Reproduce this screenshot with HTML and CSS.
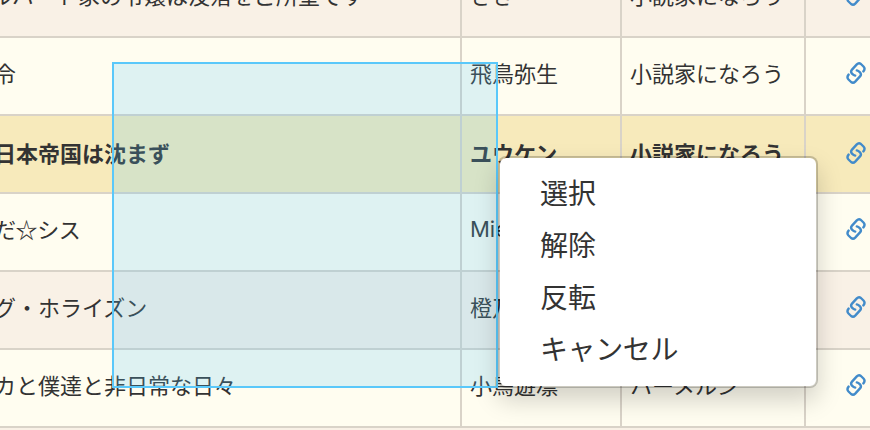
FILE: index.html
```html
<!DOCTYPE html>
<html lang="ja">
<head>
<meta charset="utf-8">
<title>小説一覧</title>
<link rel="stylesheet" href="styles.css">
</head>
<body>
<svg class="defs" aria-hidden="true">
  <symbol id="link" viewBox="0 0 20 22">
    <g fill="none" stroke="currentColor" stroke-width="2.4" stroke-linecap="round" stroke-linejoin="round">
      <path d="M9.2 13.6 Q7.7 13.3 6 11.6 Q4.2 9.6 6 7.6 L10.8 2.4 Q12.8 .4 14.9 2 L17.5 4.5 Q19.6 6.8 17.4 9.4"/>
      <path d="M10.8 8.4 Q12.3 8.7 14 10.4 Q15.8 12.4 14 14.4 L9.2 19.6 Q7.2 21.6 5.1 20 L2.5 17.5 Q.4 15.2 2.6 12.6"/>
    </g>
  </symbol>
</svg>
<div class="table">
  <div class="row odd first"><div>ルバート家の令嬢は没落をご所望です</div><div>さき</div><div>小説家になろう</div><div><svg class="icon"><use href="#link"/></svg></div></div>
  <div class="row"><div>令</div><div>飛鳥弥生</div><div>小説家になろう</div><div><svg class="icon"><use href="#link"/></svg></div></div>
  <div class="row marked"><div>日本帝国は沈まず</div><div>ユウケン</div><div>小説家になろう</div><div><svg class="icon"><use href="#link"/></svg></div></div>
  <div class="row"><div class="tight">だ☆シス</div><div class="latin">Mie</div><div></div><div><svg class="icon"><use href="#link"/></svg></div></div>
  <div class="row odd"><div>グ・ホライズン</div><div>橙乃</div><div></div><div><svg class="icon"><use href="#link"/></svg></div></div>
  <div class="row"><div>カと僕達と非日常な日々</div><div>小鳥遊凛</div><div>ハーメルン</div><div><svg class="icon"><use href="#link"/></svg></div></div>
  <div class="row odd last"></div>
</div>
<div class="selection"></div>
<ul class="menu">
  <li>選択</li>
  <li>解除</li>
  <li>反転</li>
  <li class="tight">キャンセル</li>
</ul>
</body>
</html>
```
FILE: styles.css
```css
body {
  margin: 0;
  height: 430px;
  overflow: hidden;
  background: #fffdf0;
  color: #333;
  font-family: "Noto Sans CJK JP", sans-serif;
  font-size: 22px;
  line-height: 32px;
}
.defs { display: none; }
.table { margin-top: -40px; }
.row {
  display: grid;
  grid-template-columns: 462px 160px 184px 64px;
  height: 78px;
  background: #fffdf0;
}
.row.odd { background: #f9f1e6; }
.row.marked { background: #f7eabb; font-weight: 700; }
.row.last { height: 2px; }
.row > div {
  box-sizing: border-box;
  display: flex;
  align-items: center;
  border-right: 2px solid #d9d3c8;
  border-bottom: 2px solid #d9d3c8;
  padding: 0 0 8px 8px;
  white-space: nowrap;
}
.row > div:first-child { padding-left: 0; text-indent: -6px; }
.row.first > div:first-child { text-indent: -10px; }
.row > .latin { font-family: Inter, sans-serif; padding-bottom: 6px; }
.tight { letter-spacing: -.4px; }
.row > div:last-child { border-right: 0; padding: 0 0 6px 40px; }
.row.marked > div { padding-bottom: 5px; }
.row.marked > div:last-child { padding-bottom: 2px; }
.icon { width: 20px; height: 22px; color: #428bca; }
.selection {
  position: absolute;
  left: 112px;
  top: 62px;
  box-sizing: border-box;
  width: 386px;
  height: 326px;
  border: 2px solid #5ac8fa;
  background: rgba(90, 200, 250, .2);
}
.menu {
  position: absolute;
  left: 498px;
  top: 156px;
  box-sizing: border-box;
  width: 320px;
  height: 232px;
  margin: 0;
  padding: 8px 0;
  border: 2px solid rgba(0, 0, 0, .2);
  border-radius: 8px;
  background: #fff;
  background-clip: padding-box;
  box-shadow: 0 12px 24px rgba(0, 0, 0, .175);
  list-style: none;
  font-size: 28px;
  line-height: 52px;
}
.menu li { padding-left: 40px; }
```
